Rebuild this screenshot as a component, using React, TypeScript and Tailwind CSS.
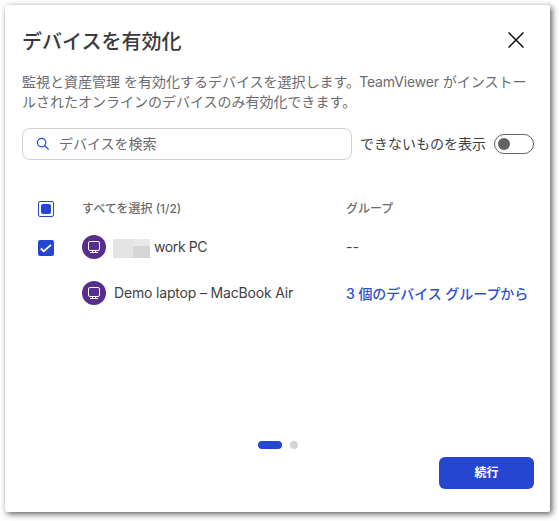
import React, { useState } from 'react';

type Device = {
  id: number;
  name: string;
  masked?: boolean;
  selected: boolean;
  group?: string;
};

const devices: Device[] = [
  { id: 1, name: 'work PC', masked: true, selected: true },
  { id: 2, name: 'Demo laptop – MacBook Air', selected: false, group: '3 個のデバイス グループから' },
];

const MonitorIcon = () => (
  <span className="flex h-6 w-6 shrink-0 items-center justify-center rounded-full bg-[#592d8e]">
    <svg width="24" height="24" viewBox="0 0 24 24" fill="none" stroke="#fff" strokeWidth="1">
      <rect x="6.5" y="6.5" width="11" height="9" rx="1.5" />
      <path d="M10.5 15.5v2M13.5 15.5v2M8 17.5h8" />
    </svg>
  </span>
);

const SearchIcon = () => (
  <svg width="14" height="14" viewBox="0 0 14 14" fill="none" stroke="#2546d0" strokeWidth="1.2" className="shrink-0">
    <circle cx="5.6" cy="5.6" r="4.2" />
    <path d="M8.7 8.7l4 3.9" />
  </svg>
);

// Blurred-out part of a device name
const MaskedName = () => (
  <span className="mt-1 mr-1 grid h-[19px] w-[37px] shrink-0 grid-cols-[20px_17px] grid-rows-[7px_12px]">
    <span className="row-span-2 bg-[#e3e3e3]" />
    <span className="bg-[#e9e9e9]" />
    <span className="bg-[#d5d5d5]" />
  </span>
);

const App = () => {
  const [search, setSearch] = useState('');
  const [showUnavailable, setShowUnavailable] = useState(false);

  return (
    <div className="h-[521px] w-[559px] overflow-hidden bg-white p-[5px] font-['Inter','Noto_Sans_CJK_JP',sans-serif] text-sm text-[#3f3f42]">
      <div className="flex h-[507px] w-[545px] flex-col rounded-[2px] bg-white pr-4 pl-[17px] shadow-[2px_2px_6px_0_rgba(0,0,0,0.65)]">
        <header className="flex h-[67px] items-center justify-between pt-[5px]">
          <h1 className="pt-[2px] text-xl leading-7 font-medium text-[#3a3a3c]">デバイスを有効化</h1>
          <button type="button" aria-label="閉じる" className="mr-[10px] -mt-[2px]">
            <svg width="16" height="16" viewBox="0 0 16 16" stroke="#111" strokeWidth="1.5">
              <path d="M.5 .5l15 15M15.500 .5l-15 15" />
            </svg>
          </button>
        </header>

        <p className="leading-5 whitespace-nowrap text-[#6b6b6f]">
          監視と資産管理 を有効化するデバイスを選択します。
          <span className="-ml-px tracking-[-0.15px]">TeamViewer </span>がインストー
          <br />
          ルされたオンラインのデバイスのみ有効化できます。
        </p>

        <div className="mt-4 flex h-8 items-center">
          <label className="flex h-8 w-[330px] items-center rounded-lg border border-[#d0d3d6] px-[13px]">
            <SearchIcon />
            <input
              value={search}
              onChange={e => setSearch(e.target.value)}
              placeholder="デバイスを検索"
              className="ml-[9px] w-full outline-none placeholder:text-[#6b6b6f]"
            />
          </label>
          <span className="ml-2 w-[126px] whitespace-nowrap">できないものを表示</span>
          <button
            type="button"
            role="switch"
            aria-checked={showUnavailable}
            onClick={() => setShowUnavailable(!showUnavailable)}
            className="ml-2 flex h-5 w-10 shrink-0 items-center rounded-full border border-[#626266] px-[3px]"
          >
            <span className="h-3 w-3 rounded-full bg-[#626266]" />
          </button>
        </div>

        <div className="mt-[31px] grid grid-cols-[44px_264px_1fr] items-center pl-4">
          <div className="flex h-9 items-center">
            <span className="flex h-4 w-4 items-center justify-center rounded-[2px] border border-[#2546d0]">
              <span className="h-[10px] w-[10px] rounded-[2px] bg-[#2546d0]" />
            </span>
          </div>
          <span className="pb-px text-xs font-medium text-[#6b6b6f]">すべてを選択 (1/2)</span>
          <span className="pb-px text-xs font-medium text-[#6b6b6f]">グループ</span>

          {devices.map(device => (
            <React.Fragment key={device.id}>
              <div className="flex h-[46px] items-center pb-1">
                {device.selected && (
                  <span className="flex h-4 w-4 items-center justify-center rounded-[2px] bg-[#2546d0]">
                    <svg width="16" height="16" viewBox="0 0 16 16" fill="none" stroke="#fff" strokeWidth="1.800">
                      <path d="M2.800 8.500l3 2.700 7.200-6.400" />
                    </svg>
                  </span>
                )}
              </div>
              <div className="flex h-[46px] items-center pb-[7px] whitespace-nowrap">
                <MonitorIcon />
                {device.masked && (
                  <span className="ml-[7px]">
                    <MaskedName />
                  </span>
                )}
                <span className={device.masked ? 'tracking-[-0.4px]' : 'ml-2 tracking-[-0.17px]'}>{device.name}</span>
              </div>
              {device.group ? (
                <a className="pb-1 font-medium tracking-[-0.05px] whitespace-nowrap text-[#2f4fd2]">{device.group}</a>
              ) : (
                <span className="pb-[7px]">--</span>
              )}
            </React.Fragment>
          ))}
        </div>

        <footer className="mt-auto pb-[23px]">
          <div className="mb-2 flex items-center justify-center gap-2">
            <span className="h-2 w-6 rounded-full bg-[#2546d0]" />
            <span className="h-2 w-2 rounded-full bg-[#d3d5d8]" />
          </div>
          <button
            type="button"
            className="ml-auto flex h-8 w-[95px] items-center justify-center rounded-md bg-[#2546d0] text-xs font-bold text-white"
          >
            続行
          </button>
        </footer>
      </div>
    </div>
  );
};

export default App;
